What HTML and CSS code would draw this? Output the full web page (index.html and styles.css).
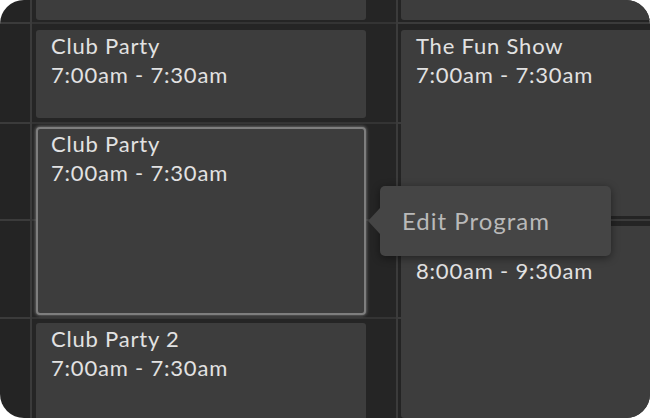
FILE: index.html
```html
<!DOCTYPE html>
<html lang="en">
<head>
  <meta charset="UTF-8" />
  <title>Schedule</title>
  <link rel="stylesheet" href="styles.css">
</head>
<body>

  <div class="schedule">
    <div class="gutter"></div>

    <div class="col col-left">
      <div class="event event-cut"></div>
      <div class="event slot-b">
        <p class="event-title">Club Party</p>
        <p class="event-time">7:00am - 7:30am</p>
      </div>
      <div class="event slot-c selected">
        <p class="event-title">Club Party</p>
        <p class="event-time">7:00am - 7:30am</p>
      </div>
      <div class="event slot-d">
        <p class="event-title">Club Party 2</p>
        <p class="event-time">7:00am - 7:30am</p>
      </div>
    </div>

    <div class="col col-right">
      <div class="event event-cut"></div>
      <div class="event slot-fun">
        <p class="event-title">The Fun Show</p>
        <p class="event-time">7:00am - 7:30am</p>
      </div>
      <!-- title of this one sits under the popover -->
      <div class="event slot-next">
        <p class="event-time">8:00am - 9:30am</p>
      </div>
    </div>

    <!-- popover for the selected event -->
    <div class="tooltip">Edit Program</div>
  </div>

</body>
</html>
```

FILE: styles.css
```css
body {
  margin: 0;
  background-color: white;
  font-family: 'Lato', sans-serif;
}

.schedule {
  position: relative;
  display: flex;
  width: 650px;
  height: 418px;
  border-radius: 24px;
  overflow: hidden;
  background-color: #242424;
  /* hour lines */
  background-image: linear-gradient(to bottom,
    transparent 22px, #3b3b3b 22px 24px,
    transparent 24px 122px, #3b3b3b 122px 124px,
    transparent 124px 219px, #3b3b3b 219px 221px,
    transparent 221px 317px, #3b3b3b 317px 319px,
    transparent 319px);
}

.gutter {
  width: 30px;
  flex-shrink: 0;
}

.col {
  display: flex;
  flex-direction: column;
  border-left: 2px solid #3b3b3b;
}

.col-left {
  width: 360px;
  flex-shrink: 0;
  padding-left: 4px;
  background-color: rgba(40, 40, 40, 0.35);
}

.col-right {
  flex: 1;
  padding-left: 3px;
}

.event {
  background-color: #3d3d3d;
  border-radius: 3px;
  padding: 1px 15px;
  box-sizing: border-box;
  flex-shrink: 0;
}

.col-left .event {
  width: 330px;
}

.event p {
  margin: 0;
  font-size: 22px;
  letter-spacing: 0.8px;
  line-height: 29px;
  color: #e2e2e2;
  white-space: nowrap;
}

.event-cut {
  height: 20px;
  border-top-left-radius: 0;
  border-top-right-radius: 0;
}

.slot-b {
  margin-top: 10px;
  height: 88px;
}

.slot-c {
  margin-top: 9px;
  height: 188px;
}

.slot-d {
  margin-top: 8px;
  flex: 1;
  border-bottom-left-radius: 0;
  border-bottom-right-radius: 0;
}

.col-right .event {
  border-top-right-radius: 0;
  border-bottom-right-radius: 0;
}

.slot-fun {
  margin-top: 10px;
  height: 186px;
}

.slot-next {
  margin-top: 10px;
  padding-top: 30px;
  flex: 1;
}

.selected {
  border: 2px solid #7e7e7e;
  padding: 0 13px;
  border-radius: 4px;
  box-shadow: 0 0 3px 1px rgba(170, 170, 170, 0.45);
}

.tooltip {
  position: absolute;
  left: 380px;
  top: 186px;
  width: 231px;
  height: 70px;
  box-sizing: border-box;
  padding-left: 22px;
  background-color: #454545;
  border-radius: 5px;
  box-shadow: 0 2px 8px rgba(0, 0, 0, 0.45);
  color: #b9b9b9;
  font-size: 24px;
  letter-spacing: 1px;
  line-height: 70px;
}

.tooltip::before {
  content: "";
  position: absolute;
  left: -12px;
  top: 22px;
  border-top: 13px solid transparent;
  border-bottom: 13px solid transparent;
  border-right: 12px solid #454545;
}
```
